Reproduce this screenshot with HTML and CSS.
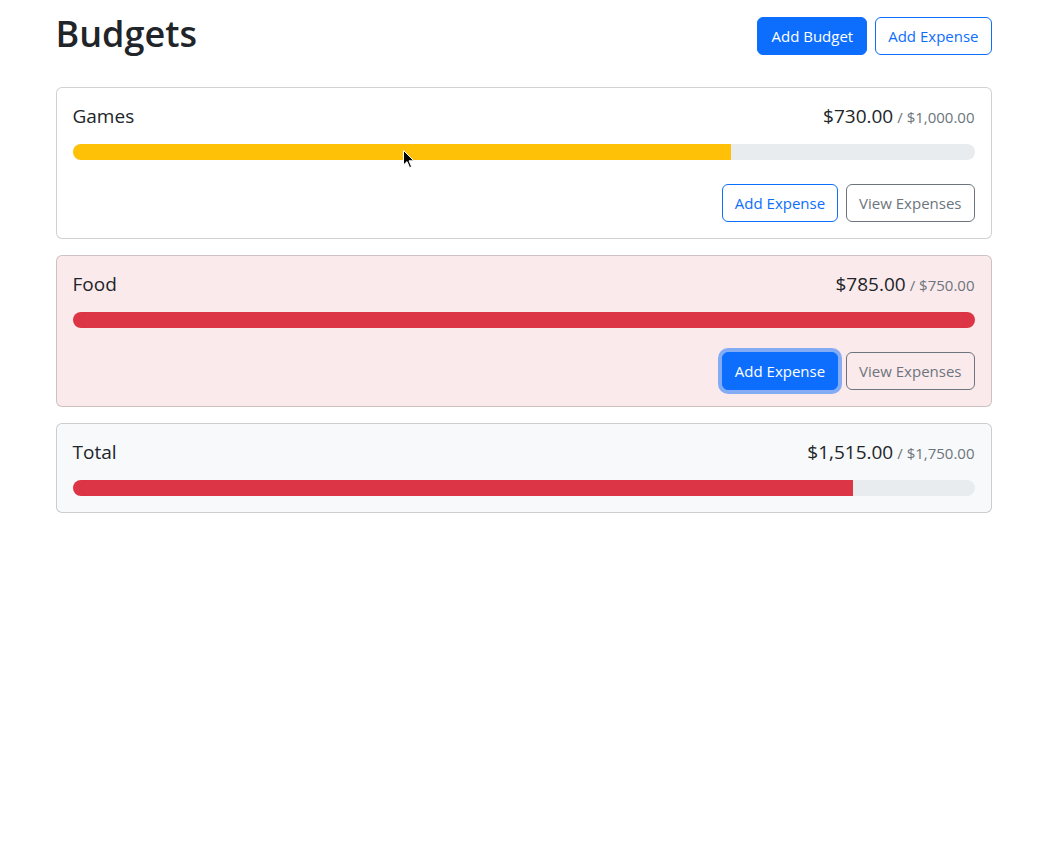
FILE: index.html
```html
<!DOCTYPE html>
<html lang="en">
<head>
<meta charset="utf-8">
<title>Budgets</title>
<link rel="stylesheet" href="styles.css">
</head>
<body>
<div class="container">
  <div class="header">
    <h1 class="title">Budgets</h1>
    <button class="btn btn-primary">Add Budget</button>
    <button class="btn btn-outline-primary">Add Expense</button>
  </div>
  <div class="budget-grid">
    <div class="card">
      <div class="card-body">
        <div class="card-title">
          <div class="name">Games</div>
          <div class="amount">$730.00<span class="max">/ $1,000.00</span></div>
        </div>
        <div class="progress"><div class="progress-bar bar-warning" style="width: 73%"></div></div>
        <div class="actions">
          <button class="btn btn-outline-primary">Add Expense</button>
          <button class="btn btn-outline-secondary">View Expenses</button>
        </div>
      </div>
    </div>
    <div class="card card-danger">
      <div class="card-body">
        <div class="card-title">
          <div class="name">Food</div>
          <div class="amount">$785.00<span class="max">/ $750.00</span></div>
        </div>
        <div class="progress"><div class="progress-bar bar-danger" style="width: 100%"></div></div>
        <div class="actions">
          <button class="btn btn-outline-primary is-focused">Add Expense</button>
          <button class="btn btn-outline-secondary">View Expenses</button>
        </div>
      </div>
    </div>
    <div class="card card-light">
      <div class="card-body">
        <div class="card-title">
          <div class="name">Total</div>
          <div class="amount">$1,515.00<span class="max">/ $1,750.00</span></div>
        </div>
        <div class="progress"><div class="progress-bar bar-danger" style="width: 86.57%"></div></div>
      </div>
    </div>
  </div>
</div>
<svg class="cursor" width="12" height="19" viewBox="0 0 12 19" aria-hidden="true">
  <path d="M0.5 0.5 L0.5 15 L4 11.6 L6.6 17.6 L8.6 16.7 L6 10.8 L10.8 10.8 Z" fill="#000" stroke="#fff" stroke-width="1"/>
</svg>
</body>
</html>
```
FILE: styles.css
```css
* { box-sizing: border-box; }
html, body { margin: 0; padding: 0; }
body {
  font-family: "Segoe UI", "Open Sans", "Noto Sans", sans-serif;
  font-size: 16px;
  line-height: 1.5;
  color: #212529;
  background: #fff;
  position: relative;
  min-height: 858px;
}
.container {
  max-width: 960px;
  margin: 0 auto;
  padding: 9px 12px 0;
}
.header {
  display: flex;
  align-items: center;
  gap: 8px;
  margin-bottom: 25px;
}
.title {
  margin: 2px auto 6px 0;
  font-size: 36px;
  font-weight: 600;
  line-height: 45px;
}
.btn {
  font-family: inherit;
  font-size: 15px;
  line-height: 24px;
  padding: 6px 12px;
  border-radius: 6px;
  border: 1px solid transparent;
  background: transparent;
  cursor: pointer;
  white-space: nowrap;
}
.btn-primary { background: #0d6efd; border-color: #0d6efd; color: #fff; padding: 6px 13px; }
.btn-outline-primary { border-color: #0d6efd; color: #0d6efd; }
.btn-outline-secondary { border-color: #6c757d; color: #6c757d; }
.btn.is-focused {
  background: #0d6efd;
  color: #fff;
  box-shadow: 0 0 0 4px rgba(13, 110, 253, 0.5);
}
.budget-grid {
  display: grid;
  grid-template-columns: 1fr;
  gap: 16px;
  align-items: start;
}
.card {
  border: 1px solid rgba(0, 0, 0, 0.175);
  border-radius: 6px;
  background: #fff;
}
.card-danger { background: rgba(220, 53, 69, 0.1); }
.card-light { background: #f8f9fa; }
.card-body { padding: 16px; }
.card-title {
  display: flex;
  justify-content: space-between;
  align-items: baseline;
  height: 24px;
  font-size: 19px;
  line-height: 24px;
  margin-bottom: 16px;
}
.name { margin-right: 8px; }
.amount { display: flex; align-items: baseline; }
.max {
  font-size: 15px;
  color: #6c757d;
  margin-left: 4px;
}
.progress {
  height: 16px;
  background: #e9ecef;
  border-radius: 50rem;
  overflow: hidden;
  display: flex;
}
.progress-bar { height: 100%; }
.bar-warning { background: #ffc107; }
.bar-danger { background: #dc3545; }
.actions {
  display: flex;
  justify-content: flex-end;
  gap: 8px;
  margin-top: 24px;
}
.cursor {
  position: absolute;
  left: 403px;
  top: 150px;
}
```
